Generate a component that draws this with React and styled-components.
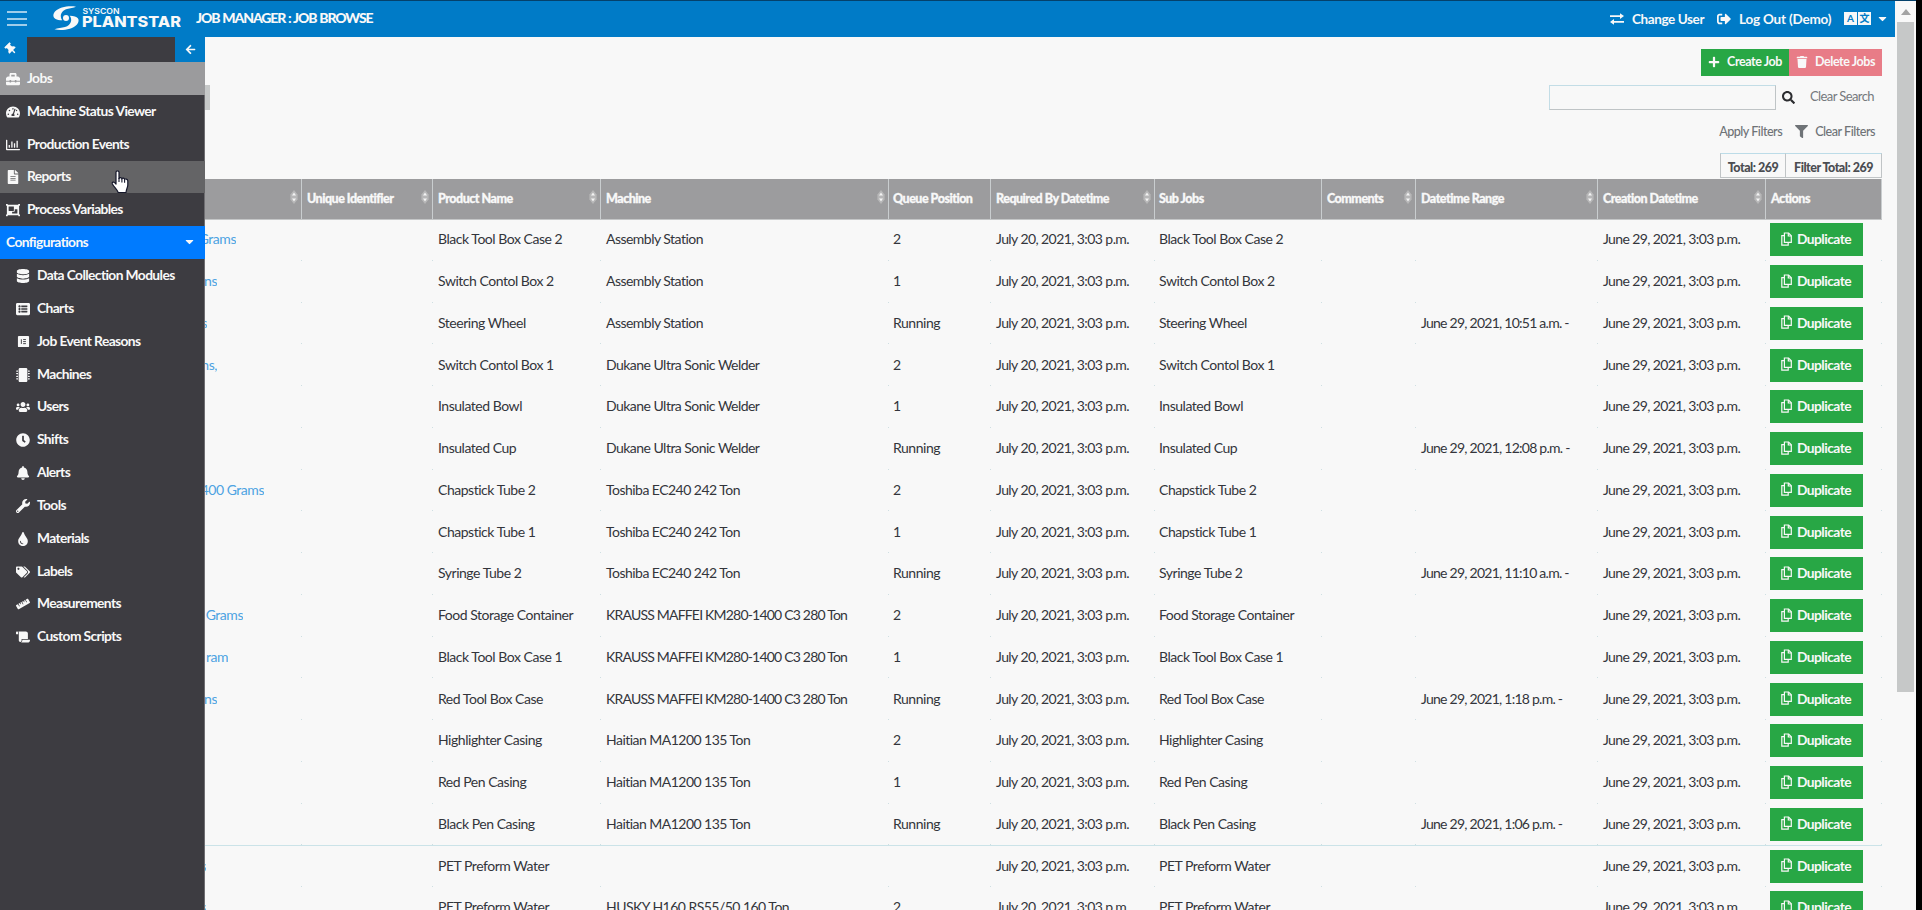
import React from "react";
import styled, { createGlobalStyle, css } from "styled-components";
import {
  FaToolbox, FaTachometerAlt, FaRegChartBar, FaFileAlt, FaObjectGroup, FaDatabase,
  FaListAlt, FaMicrochip, FaUsers, FaClock, FaBell, FaWrench, FaTint, FaTags, FaRuler,
  FaScroll, FaThumbtack, FaArrowLeft, FaCaretDown, FaSignOutAlt, FaPlus, FaTrash,
  FaSearch, FaFilter
} from "react-icons/fa";

const BadgeListIcon = () => (
  <svg viewBox="0 0 14 14" width="13" height="13">
    <rect x="1" y="1" width="12" height="12" rx="1" fill="currentColor" />
    <path d="M4.7 4.6v5M6.6 4.9h3M6.6 7.1h3M6.6 9.3h3" stroke="#3d3c41" strokeWidth="1" fill="none" />
  </svg>
);

const SwapIcon = () => (
  <svg viewBox="0 0 14 12" width="14" height="12" fill="currentColor">
    <path d="M0 2.3h10V.2L14 3.1l-4 2.9V4H0zM14 8H4V6L0 8.9l4 2.9V9.7h10z" />
  </svg>
);

const CopyIcon = () => (
  <svg viewBox="0 0 11 14" width="11" height="14" fill="none" stroke="currentColor" strokeWidth="1.2">
    <path d="M3.4 1h4.2L10.3 3.8v6.6H3.4z" />
    <path d="M7.3 1v3h3M3.2 3.6H.8v9.6h6.4v-2.4" />
  </svg>
);

const SortIcon = () => (
  <svg viewBox="0 0 8 14" width="8" height="14">
    <path d="M4 0l3.6 4.4v5.2L4 14 .4 9.6V4.4z" fill="#b7b7b8" />
    <path d="M4 2.600l2 2.800H2zM4 11.400l2-2.800H2z" fill="#f4f4f4" />
  </svg>
);

const Logo = () => (
  <svg viewBox="0 0 130 26" width="130" height="26" fill="#f8f8f8">
    <path d="M25 .7C18 -.5 8.500 .8 4 5.600C.3 10.400 3 14.300 11.200 14.300C8.500 10.500 9.500 5 16 3C19 2.200 22.500 2 25 .7z" />
    <path d="M3.500 23.300C11 24.900 21.500 23.400 26 18.400C29.700 13.600 27 9.700 18.800 9.700C21.500 13.500 20.500 19 14 21C11 21.800 6.500 22 3.500 23.300z" />
    <circle cx="15" cy="12" r="3" />
    <text x="31.500" y="7.700" textLength="37" lengthAdjust="spacingAndGlyphs" fontFamily="Inter, sans-serif" fontSize="7.600" fontWeight="600">SYSCON</text>
    <text x="31" y="21.200" textLength="99" lengthAdjust="spacingAndGlyphs" fontFamily="Inter, sans-serif" fontSize="14.400" fontWeight="800">PLANTSTAR</text>
  </svg>
);

const Pointer = () => (
  <Cursor viewBox="0 0 18 24" width="18" height="24">
    <path
      d="M5 2.200C5 .4 8 .4 8 2.200V8.500c.3-1.300 2.700-1.200 2.900.3.500-1.100 2.500-.8 2.700.7.600-.9 3-.6 3.200 1.200V15c0 2.500-1.500 4-1.800 7.500H7.200C6.500 20 2.500 16.500 1.300 13.700c-.6-1.500 1.300-2.200 2.300-1.100L5 14z"
      fill="#fff" stroke="#15172a" strokeWidth="1.200" strokeLinejoin="round"
    />
    <path d="M8 8v4M10.900 9v3.500M13.600 10v2.800" stroke="#15172a" strokeWidth="1.100" />
  </Cursor>
);

const menu = [
  { label: "Jobs", icon: FaToolbox, state: "active" },
  { label: "Machine Status Viewer", icon: FaTachometerAlt },
  { label: "Production Events", icon: FaRegChartBar },
  { label: "Reports", icon: FaFileAlt, state: "hover" },
  { label: "Process Variables", icon: FaObjectGroup },
];

const configurations = [
  { label: "Data Collection Modules", icon: FaDatabase },
  { label: "Charts", icon: FaListAlt },
  { label: "Job Event Reasons", icon: BadgeListIcon },
  { label: "Machines", icon: FaMicrochip },
  { label: "Users", icon: FaUsers },
  { label: "Shifts", icon: FaClock },
  { label: "Alerts", icon: FaBell },
  { label: "Tools", icon: FaWrench },
  { label: "Materials", icon: FaTint },
  { label: "Labels", icon: FaTags },
  { label: "Measurements", icon: FaRuler },
  { label: "Custom Scripts", icon: FaScroll },
];

const columns = [
  { label: "", sort: true },
  { label: "Unique Identifier", sort: true },
  { label: "Product Name", sort: true },
  { label: "Machine", sort: true },
  { label: "Queue Position" },
  { label: "Required By Datetime", sort: true },
  { label: "Sub Jobs" },
  { label: "Comments", sort: true },
  { label: "Datetime Range", sort: true },
  { label: "Creation Datetime", sort: true },
  { label: "Actions" },
];

// link: tail of the job description left visible beside the menu, reach: its width
const jobs = [
  { link: "Grams", reach: 31, product: "Black Tool Box Case 2", machine: "Assembly Station", queue: "2" },
  { link: "ns", reach: 12, product: "Switch Contol Box 2", machine: "Assembly Station", queue: "1" },
  { link: "s", reach: 2, product: "Steering Wheel", machine: "Assembly Station", queue: "Running", range: "June 29, 2021, 10:51 a.m. -" },
  { link: "ns,", reach: 12, product: "Switch Contol Box 1", machine: "Dukane Ultra Sonic Welder", queue: "2" },
  { product: "Insulated Bowl", machine: "Dukane Ultra Sonic Welder", queue: "1" },
  { product: "Insulated Cup", machine: "Dukane Ultra Sonic Welder", queue: "Running", range: "June 29, 2021, 12:08 p.m. -" },
  { link: "400 Grams", reach: 59, product: "Chapstick Tube 2", machine: "Toshiba EC240 242 Ton", queue: "2" },
  { product: "Chapstick Tube 1", machine: "Toshiba EC240 242 Ton", queue: "1" },
  { product: "Syringe Tube 2", machine: "Toshiba EC240 242 Ton", queue: "Running", range: "June 29, 2021, 11:10 a.m. -" },
  { link: "Grams", reach: 38, product: "Food Storage Container", machine: "KRAUSS MAFFEI KM280-1400 C3 280 Ton", queue: "2" },
  { link: "ram", reach: 23, product: "Black Tool Box Case 1", machine: "KRAUSS MAFFEI KM280-1400 C3 280 Ton", queue: "1" },
  { link: "ns", reach: 12, product: "Red Tool Box Case", machine: "KRAUSS MAFFEI KM280-1400 C3 280 Ton", queue: "Running", range: "June 29, 2021, 1:18 p.m. -" },
  { product: "Highlighter Casing", machine: "Haitian MA1200 135 Ton", queue: "2" },
  { product: "Red Pen Casing", machine: "Haitian MA1200 135 Ton", queue: "1" },
  { product: "Black Pen Casing", machine: "Haitian MA1200 135 Ton", queue: "Running", range: "June 29, 2021, 1:06 p.m. -", last: true },
  { link: "s", reach: 1, product: "PET Preform Water", machine: "", queue: "" },
  { link: "s", reach: 1, product: "PET Preform Water", machine: "HUSKY H160 RS55/50 160 Ton", queue: "2" },
];

const App = () => {
  return (
    <Screen>
      <GlobalStyle />
      <Page>
        <Header>
          <Burger><i /><i /><i /></Burger>
          <Logo />
          <Title>JOB MANAGER : JOB BROWSE</Title>
          <HeaderLink $width={107} $space="-0.4px"><SwapIcon />Change User</HeaderLink>
          <HeaderLink $width={127} $space="-0.2px"><FaSignOutAlt size={14} />Log Out (Demo)</HeaderLink>
          <Language><b>A</b><b>文</b><FaCaretDown size={13} /></Language>
        </Header>
        <Body>
          <Sidebar>
            <SidebarTop>
              <Pin><FaThumbtack size={12} /></Pin>
              <Back><FaArrowLeft size={11} /></Back>
            </SidebarTop>
            {menu.map(({ label, icon: Icon, state }) => (
              <MenuItem key={label} $state={state}>
                <IconSlot><Icon size={14} /></IconSlot>{label}
              </MenuItem>
            ))}
            <Group>Configurations<FaCaretDown size={13} /></Group>
            {configurations.map(({ label, icon: Icon }) => (
              <MenuItem key={label} $nested>
                <IconSlot><Icon size={14} /></IconSlot>{label}
              </MenuItem>
            ))}
            <Pointer />
          </Sidebar>
          <Main>
            <ButtonRow>
              <ToolbarButton $width={88} $color="#28a745"><FaPlus size={12} />Create Job</ToolbarButton>
              <ToolbarButton $width={93} $color="#e87c87"><FaTrash size={12} />Delete Jobs</ToolbarButton>
            </ButtonRow>
            <SearchRow>
              <Handle />
              <SearchBox />
              <FaSearch size={13} />
              <span>Clear Search</span>
            </SearchRow>
            <FilterRow>
              <span>Apply Filters</span>
              <FaFilter size={13} />
              <span>Clear Filters</span>
            </FilterRow>
            <Totals>
              <Total $width={66}>Total: 269</Total>
              <Total $width={96}>Filter Total: 269</Total>
            </Totals>
            <HeadRow>
              {columns.map((column, i) => (
                <HeadCell key={i}>{column.label}{column.sort && <SortIcon />}</HeadCell>
              ))}
            </HeadRow>
            {jobs.map((job, i) => (
              <Row key={i} $last={job.last}>
                <LinkCell>{job.link && <JobLink $width={job.reach}><span>{job.link}</span></JobLink>}</LinkCell>
                <Cell />
                <Cell>{job.product}</Cell>
                <Cell $space={job.machine.startsWith("KRAUSS") ? "-0.8px" : "-0.53px"}>{job.machine}</Cell>
                <Cell>{job.queue}</Cell>
                <Cell $space="-0.58px">July 20, 2021, 3:03 p.m.</Cell>
                <Cell>{job.product}</Cell>
                <Cell />
                <Cell $space="-0.75px">{job.range}</Cell>
                <Cell $space="-0.62px">June 29, 2021, 3:03 p.m.</Cell>
                <Cell><Duplicate><CopyIcon />Duplicate</Duplicate></Cell>
              </Row>
            ))}
          </Main>
        </Body>
      </Page>
      <Scrollbar>
        <ScrollArrow />
        <Thumb />
      </Scrollbar>
    </Screen>
  );
};

const GlobalStyle = createGlobalStyle`
  * {
    box-sizing: border-box;
  }
  body {
    margin: 0;
    overflow: hidden;
    background: #000;
    font-family: Lato, "Noto Sans CJK SC", sans-serif;
  }
  svg {
    flex: none;
  }
`

const Screen = styled.div`
  display: flex;
  width: 1916px;
  height: 910px;
  overflow: hidden;
  background: #f8f8f8;
  border-top: 1px solid #04416b;
`

const Page = styled.div`
  width: 1895px;
  display: flex;
  flex-direction: column;
`

const Header = styled.header`
  flex: none;
  display: flex;
  align-items: center;
  height: 36px;
  padding: 0 6px 1px 7px;
  background: #007bc7;
  color: #f8f8f8;
`

const Burger = styled.div`
  width: 20px;
  height: 15px;
  margin: 0 24px 0 0;
  display: flex;
  flex-direction: column;
  justify-content: space-between;
  i {
    height: 2px;
    background: #9fcdea;
  }
`

const Title = styled.h1`
  margin: 0 auto 3px 15px;
  font-size: 14px;
  font-weight: 900;
  letter-spacing: -1.1px;
  word-spacing: 0.6px;
  white-space: nowrap;
`

const HeaderLink = styled.div`
  width: ${(props) => props.$width}px;
  display: flex;
  align-items: center;
  gap: 8px;
  font-size: 13.5px;
  font-weight: 700;
  letter-spacing: ${(props) => props.$space};
  white-space: nowrap;
`

const Language = styled.div`
  display: flex;
  align-items: center;
  gap: 1px;
  b {
    width: 13px;
    height: 13px;
    background: #f8f8f8;
    color: #007bc7;
    font-size: 10px;
    line-height: 13px;
    text-align: center;
  }
  svg {
    margin-left: 4px;
  }
`

const Body = styled.div`
  flex: 1;
  display: flex;
  min-height: 0;
`

const Sidebar = styled.nav`
  position: relative;
  flex: none;
  width: 205px;
  background: #3d3c41;
  border-right: 1px solid #6f6e72;
  color: #f8f8f8;
`

const SidebarTop = styled.div`
  display: flex;
  justify-content: space-between;
  height: 25px;
`

const Pin = styled.div`
  width: 27px;
  display: flex;
  align-items: center;
  padding: 0 0 2px 5px;
  background: #007bc7;
  svg {
    transform: rotate(-45deg);
  }
`

const Back = styled.div`
  width: 30px;
  margin-right: -1px;
  display: flex;
  align-items: center;
  justify-content: center;
  background: #007bc7;
`

const states = {
  active: css`
    background: #9b9b9d;
  `,
  hover: css`
    background: #646466;
  `,
}

const MenuItem = styled.div`
  display: flex;
  align-items: center;
  height: 32.85px;
  margin-right: -1px;
  padding: 0 0 2px ${(props) => (props.$nested ? "14px" : "4px")};
  font-size: 13.8px;
  font-weight: 700;
  letter-spacing: -0.6px;
  white-space: nowrap;
  ${(props) => states[props.$state]}
`

const IconSlot = styled.span`
  width: 18px;
  margin-right: 5px;
  padding-top: 3px;
  display: flex;
  justify-content: center;
`

const Group = styled.div`
  display: flex;
  align-items: center;
  justify-content: space-between;
  height: 32.85px;
  margin-right: -1px;
  padding: 0 9px 2px 6px;
  background: #007bff;
  font-size: 13.8px;
  font-weight: 700;
  letter-spacing: -0.6px;
`

const Cursor = styled.svg`
  position: absolute;
  left: 111px;
  top: 133px;
`

const Main = styled.main`
  flex: 1;
  min-width: 0;
`

const ButtonRow = styled.div`
  display: flex;
  justify-content: flex-end;
  padding: 12px 13px 8px 0;
`

const ToolbarButton = styled.div`
  display: flex;
  align-items: center;
  justify-content: center;
  gap: 7px;
  width: ${(props) => props.$width}px;
  height: 27px;
  padding-bottom: 2px;
  background: ${(props) => props.$color};
  color: #f8f8f8;
  font-size: 12.5px;
  font-weight: 700;
  letter-spacing: -0.42px;
  white-space: nowrap;
`

const SearchRow = styled.div`
  display: flex;
  align-items: center;
  padding-right: 20px;
  color: #2c2d30;
  span {
    width: 65px;
    margin: 0 0 2px 15px;
    color: #75797d;
    font-size: 13px;
    letter-spacing: -0.6px;
    white-space: nowrap;
  }
`

const Handle = styled.div`
  width: 5px;
  height: 25px;
  margin: 1px auto 0 0;
  background: #c6c8c8;
`

const SearchBox = styled.div`
  width: 227px;
  height: 25px;
  margin-right: 6px;
  border: 1px solid #bfc4c6;
  border-top-color: #c3dde6;
  border-left-color: #c3dde6;
`

const FilterRow = styled.div`
  display: flex;
  align-items: center;
  justify-content: flex-end;
  gap: 7px;
  height: 43px;
  padding-right: 20px;
  color: #6f7377;
  font-size: 12.6px;
  font-weight: 500;
  letter-spacing: -0.5px;
  svg {
    margin-left: 6px;
  }
`

const Totals = styled.div`
  display: flex;
  justify-content: flex-end;
  padding-right: 13px;
  margin-bottom: 1px;
`

const Total = styled.div`
  width: ${(props) => props.$width}px;
  height: 25px;
  border: 1px solid #c0c4c6;
  border-top-color: #bcdce8;
  color: #4b4d52;
  font-size: 12.5px;
  font-weight: 900;
  line-height: 27px;
  letter-spacing: -0.5px;
  text-align: center;
  white-space: nowrap;
  & + & {
    border-left: 0;
  }
`

const grid = css`
  display: grid;
  grid-template-columns: 97px 131px 168px 288px 102px 164px 167px 94px 182px 168px 116px;
  width: 1677px;
`

const HeadRow = styled.div`
  ${grid}
  height: 41px;
  background: #9c9c9e;
  border-bottom: 1px solid #c4c6c7;
`

const HeadCell = styled.div`
  display: flex;
  align-items: center;
  justify-content: space-between;
  padding: 0 3px 1px 5px;
  border-right: 1px solid #c9cdcf;
  color: #f8f8f8;
  font-size: 12.5px;
  font-weight: 900;
  letter-spacing: -0.5px;
  white-space: nowrap;
  -webkit-text-stroke: 0.3px #f8f8f8;
  svg {
    margin: 0 0 4px auto;
  }
  &:nth-child(5), &:nth-child(7) {
    padding-left: 4px;
  }
`

const Row = styled.div`
  ${grid}
  height: 41.75px;
  border-bottom: 1px solid ${(props) => (props.$last ? "#cbe3e8" : "transparent")};
`

const Cell = styled.div`
  display: flex;
  align-items: center;
  padding: 0 0 3px 5px;
  background: linear-gradient(#cfdfe2, #cfdfe2) right bottom / 1px 1px no-repeat;
  color: #33353b;
  font-size: 14px;
  letter-spacing: ${(props) => props.$space || "-0.47px"};
  white-space: nowrap;
  &:nth-child(5), &:nth-child(7) {
    padding-left: 4px;
  }
`

const LinkCell = styled(Cell)`
  padding-left: 0;
`

const JobLink = styled.div`
  display: flex;
  justify-content: flex-end;
  width: ${(props) => props.$width}px;
  overflow: hidden;
  color: #4da3e2;
`

const Duplicate = styled.div`
  display: flex;
  align-items: center;
  gap: 5px;
  width: 93px;
  height: 33px;
  margin: 2px 0 0 -1px;
  padding: 0 0 2px 11px;
  background: #28a745;
  color: #f8f8f8;
  font-size: 13.8px;
  font-weight: 700;
  letter-spacing: -0.55px;
`

const Scrollbar = styled.div`
  width: 21px;
  padding: 8px 2px 0;
  display: flex;
  flex-direction: column;
  align-items: center;
`

const ScrollArrow = styled.div`
  border: 5px solid transparent;
  border-top: 0;
  border-bottom: 6px solid #a3a3a3;
`

const Thumb = styled.div`
  width: 17px;
  height: 670px;
  margin-top: 7px;
  background: #c6c8c8;
`

export default App;
